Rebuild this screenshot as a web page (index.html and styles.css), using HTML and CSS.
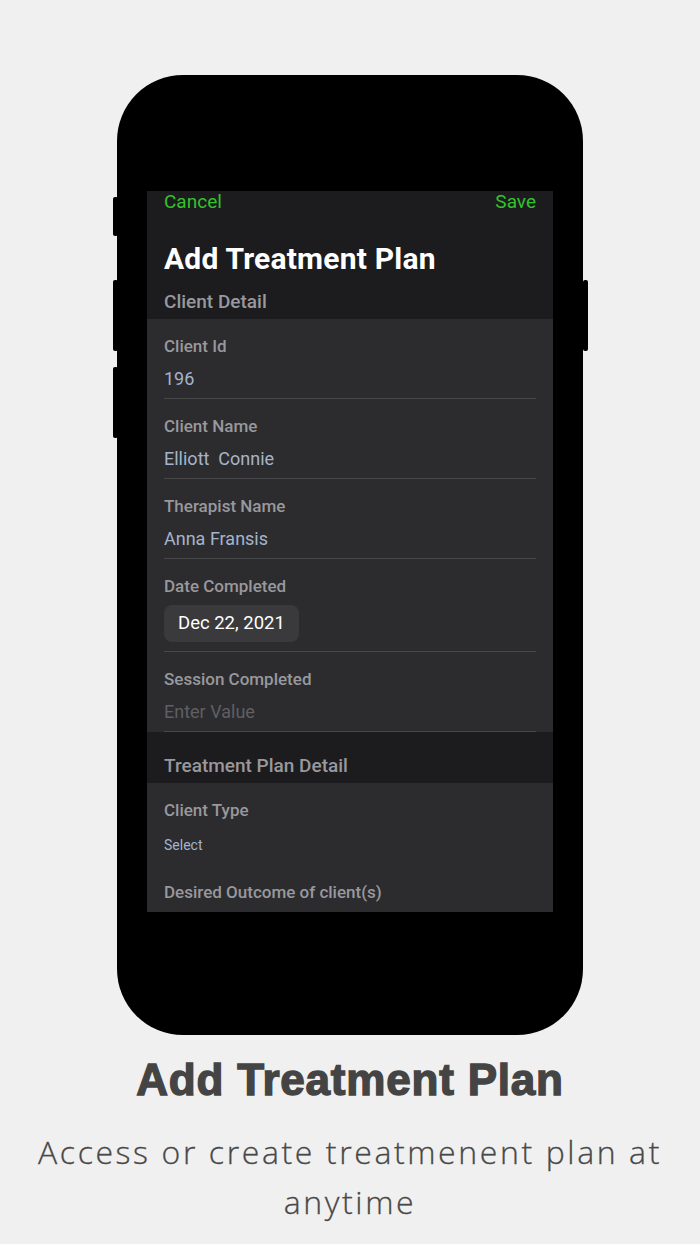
FILE: index.html
```html
<!DOCTYPE html>
<html lang="en">
<head>
  <meta charset="UTF-8" />
  <meta name="viewport" content="width=device-width, initial-scale=1.0"/>
  <title>Add Treatment Plan</title>
  <link rel="stylesheet" href="styles.css">
</head>
<body>
  <div class="phone">
    <span class="btn btn-mute"></span>
    <span class="btn btn-vol-up"></span>
    <span class="btn btn-vol-down"></span>
    <span class="btn btn-power"></span>

    <div class="screen">
      <div class="top">
        <div class="nav">
          <a href="#" class="nav-link">Cancel</a>
          <a href="#" class="nav-link">Save</a>
        </div>
        <h1 class="title">Add Treatment Plan</h1>
        <h3 class="group-title">Client Detail</h3>
      </div>

      <div class="group">
        <div class="row">
          <div class="label">Client Id</div>
          <div class="value">196</div>
        </div>
        <div class="row">
          <div class="label">Client Name</div>
          <div class="value">Elliott&nbsp; Connie</div>
        </div>
        <div class="row">
          <div class="label">Therapist Name</div>
          <div class="value">Anna Fransis</div>
        </div>
        <div class="row row-date">
          <div class="label">Date Completed</div>
          <div class="date-pill">Dec 22, 2021</div>
        </div>
        <div class="row">
          <div class="label">Session Completed</div>
          <div class="value placeholder">Enter Value</div>
        </div>
      </div>

      <h3 class="group-title group-title-gap">Treatment Plan Detail</h3>

      <div class="group">
        <div class="row row-plain">
          <div class="label">Client Type</div>
          <div class="select">Select</div>
        </div>
        <div class="row row-plain">
          <div class="label">Desired Outcome of client(s)</div>
        </div>
      </div>
    </div>
  </div>

  <h2 class="caption">Add Treatment Plan</h2>
  <p class="subcaption">Access or create treatmenent plan at anytime</p>
</body>
</html>
```

FILE: styles.css
```css
body {
  margin: 0;
  padding: 75px 0 0;
  background: #f0f0f0;
  font-family: Roboto, "Liberation Sans", sans-serif;
}
.phone {
  position: relative;
  width: 466px;
  height: 960px;
  margin: 0 auto;
  background: #000;
  border-radius: 66px;
  box-sizing: border-box;
  padding: 116px 30px 0;
}
.btn {
  position: absolute;
  width: 5px;
  background: #000;
  border-radius: 2px;
}
.btn-mute { left: -4px; top: 122px; height: 39px; }
.btn-vol-up { left: -4px; top: 205px; height: 71px; }
.btn-vol-down { left: -4px; top: 292px; height: 71px; }
.btn-power { right: -5px; top: 205px; height: 71px; }

.screen {
  height: 721px;
  overflow: hidden;
  background: #1c1c1e;
}
.top {
  height: 128px;
  padding: 0 17px;
  box-sizing: border-box;
}
.nav {
  display: flex;
  justify-content: space-between;
  height: 22px;
  line-height: 22px;
}
.nav-link {
  color: #34c22c;
  font-size: 19px;
  text-decoration: none;
}
.title {
  margin: 28px 0 0;
  color: #fff;
  font-size: 30px;
  font-weight: bold;
  letter-spacing: 0.2px;
  line-height: 36px;
}
.group-title {
  margin: 13px 0 0;
  color: #98989d;
  font-size: 19px;
  font-weight: 500;
  line-height: 24px;
}
.group-title-gap {
  margin: 0;
  padding: 22px 17px 5px;
}
.group {
  background: #2c2c2e;
  padding: 0 17px;
}
.row {
  padding: 17px 0 8px;
  border-bottom: 1px solid #48484a;
}
.row-date {
  padding-bottom: 9px;
}
.row-plain {
  border-bottom: none;
  padding-bottom: 0;
}
.row-plain:last-child {
  padding-bottom: 30px;
}
.label {
  color: #98989d;
  font-size: 17px;
  font-weight: 500;
  line-height: 20px;
}
.value {
  margin-top: 12px;
  color: #a4b4cc;
  font-size: 18px;
  line-height: 22px;
}
.placeholder {
  color: #5f5f64;
}
.date-pill {
  display: inline-block;
  margin-top: 9px;
  padding: 0 14px;
  height: 37px;
  line-height: 37px;
  background: #3a3a3c;
  border-radius: 8px;
  color: #fff;
  font-size: 18.5px;
}
.select {
  margin-top: 16px;
  margin-bottom: 11px;
  color: #a4b4cc;
  font-size: 14px;
  line-height: 18px;
}
.caption {
  margin: 20px 0 0;
  text-align: center;
  color: #444;
  font-family: "Liberation Sans", Arial, sans-serif;
  font-size: 44px;
  font-weight: bold;
  letter-spacing: 0.8px;
  line-height: 50px;
  -webkit-text-stroke: 1.4px #444;
}
.subcaption {
  margin: 22px 10px 0;
  text-align: center;
  color: #484848;
  font-family: "Open Sans", sans-serif;
  font-weight: 300;
  font-size: 32px;
  letter-spacing: 2.6px;
  line-height: 50px;
  -webkit-text-stroke: 0.3px #484848;
}
```
